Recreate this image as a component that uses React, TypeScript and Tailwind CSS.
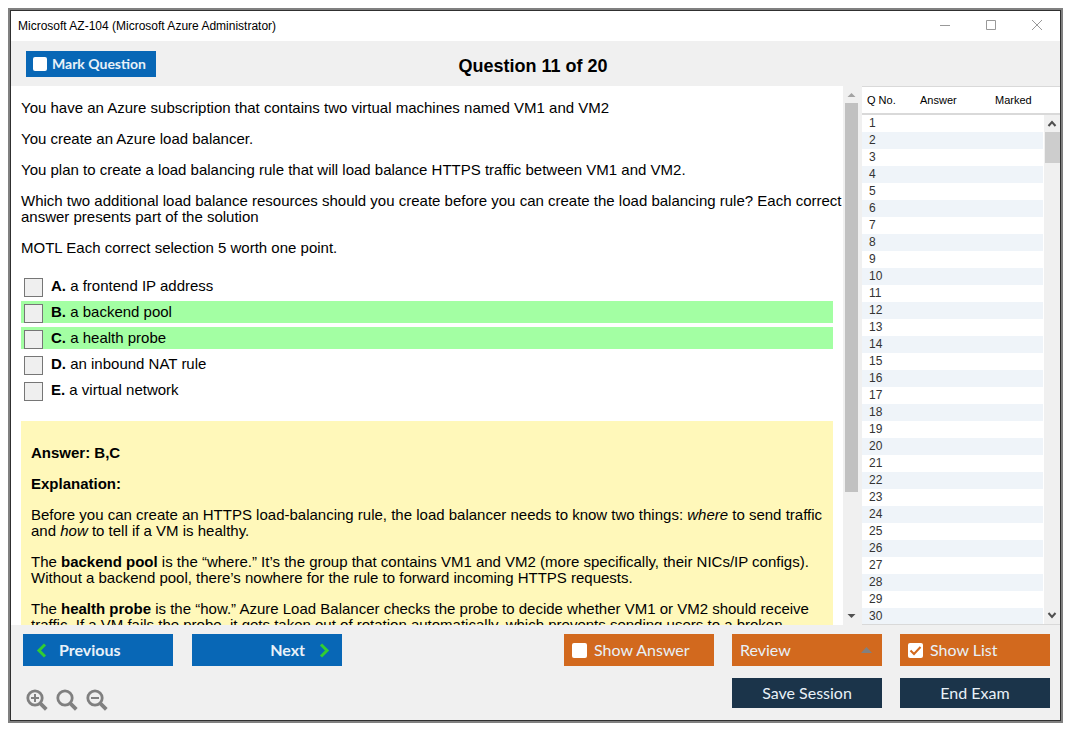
import React, { useState } from 'react';

const OPTIONS = [
  { id: 'A', text: 'a frontend IP address' },
  { id: 'B', text: 'a backend pool' },
  { id: 'C', text: 'a health probe' },
  { id: 'D', text: 'an inbound NAT rule' },
  { id: 'E', text: 'a virtual network' },
];
const CORRECT = ['B', 'C'];
const ROWS = Array.from({ length: 30 }, (_, i) => i + 1);

// White tick box used inside the coloured buttons
const TickBox = ({ checked, onChange, size }: any) => (
  <span className="grid shrink-0 place-items-center">
    <input
      type="checkbox"
      checked={checked}
      onChange={onChange}
      className={`col-start-1 row-start-1 appearance-none rounded-xs bg-white ${size}`}
    />
    {checked && (
      <svg viewBox="0 0 15 15" className="pointer-events-none col-start-1 row-start-1 size-[15px]" fill="none" stroke="#d2691e" strokeWidth="2">
        <path d="M2.5 7.5 L6 11 L12.5 4" />
      </svg>
    )}
  </span>
);

const Magnifier = ({ label, sign }: { label: string; sign?: string }) => (
  <button aria-label={label} className="size-[22px]">
    <svg viewBox="0 0 22 22" className="size-[22px]" fill="none" stroke="#808080">
      <circle cx="9" cy="9" r="7.2" strokeWidth="2.8" />
      <path d="M14.3 14.3 L20.3 20.3" strokeWidth="3.8" />
      {sign && <path d={sign} strokeWidth="2" />}
    </svg>
  </button>
);

const TitleBar = () => (
  <div className="flex h-[30px] shrink-0 items-center justify-between bg-white pl-[7px] pr-[17px]">
    <span className="text-[12px]">Microsoft AZ-104 (Microsoft Azure Administrator)</span>
    <div className="flex gap-[34px]">
      <button aria-label="Minimize">
        <svg viewBox="0 0 12 12" className="size-3" fill="none" stroke="#999"><path d="M1 5.5 H11" /></svg>
      </button>
      <button aria-label="Maximize">
        <svg viewBox="0 0 12 12" className="size-3" fill="none" stroke="#999"><path d="M1.5 0.5 H10.5 V9.5 H1.5 Z" /></svg>
      </button>
      <button aria-label="Close">
        <svg viewBox="0 0 12 12" className="size-3" fill="none" stroke="#999"><path d="M1 0 L11 10 M11 0 L1 10" /></svg>
      </button>
    </div>
  </div>
);

const Explanation = () => (
  <section className="mt-5 space-y-[15px] bg-[#fff8ba] pt-6 pl-[10px]">
    <p className="font-bold">Answer: B,C</p>
    <p className="font-bold">Explanation:</p>
    <p>
      Before you can create an HTTPS load-balancing rule, the load balancer needs to know two things: <i>where</i> to send traffic and <i>how</i> to tell if a VM is healthy.
    </p>
    <p>
      The <b>backend pool</b> is the “where.” It’s the group that contains VM1 and VM2 (more specifically, their NICs/IP configs). Without a backend pool, there’s nowhere for the rule to forward incoming HTTPS requests.
    </p>
    <p>
      The <b>health probe</b> is the “how.” Azure Load Balancer checks the probe to decide whether VM1 or VM2 should receive traffic. If a VM fails the probe, it gets taken out of rotation automatically, which prevents sending users to a broken instance.
    </p>
  </section>
);

const QuestionList = () => (
  <aside className="relative w-[198px] shrink-0 overflow-hidden border-y border-[#d9d9d9] bg-white text-[#333]">
    <table className="w-full table-fixed border-collapse">
      <thead>
        <tr className="h-[27px] border-b-2 border-[#d9d9d9] text-left text-[11px] text-black">
          <th className="w-[58px] p-0 pl-[5px] font-normal">Q No.</th>
          <th className="w-[75px] p-0 font-normal">Answer</th>
          <th className="p-0 font-normal">Marked</th>
          <th className="w-[17px] p-0"></th>
        </tr>
      </thead>
      <tbody>
        {ROWS.map((n) => (
          <tr key={n} className="group h-[17px] text-[12px] leading-[17px]">
            <td className="p-0 pl-[7px] group-even:bg-[#eff4f9]">{n}</td>
            <td className="p-0 group-even:bg-[#eff4f9]"></td>
            <td className="p-0 group-even:bg-[#eff4f9]"></td>
            <td className="p-0"></td>
          </tr>
        ))}
      </tbody>
    </table>
    <div className="absolute top-[28px] right-0 bottom-0 flex w-4 flex-col items-center bg-[#f0f0f0]">
      <svg viewBox="0 0 16 17" className="h-[17px] w-4" fill="none" stroke="#505050" strokeWidth="2"><path d="M4.5 11 L8 7 L11.5 11" /></svg>
      <div className="h-[31px] w-[15px] bg-[#cdcdcd]"></div>
      <svg viewBox="0 0 16 17" className="mt-auto h-[17px] w-4" fill="none" stroke="#505050" strokeWidth="2"><path d="M4.5 6 L8 10 L11.5 6" /></svg>
    </div>
  </aside>
);

const App: React.FC = () => {
  const [marked, setMarked] = useState(false);
  const [showAnswer, setShowAnswer] = useState(false);
  const [showList, setShowList] = useState(true);

  return (
    <div className="flex h-screen bg-white pt-2 pr-3 pb-3 pl-2 font-['Liberation_Sans',Arial,sans-serif] text-black">
      <div className="flex flex-1 border-2 border-[#808080]">
        <div className="flex min-w-0 flex-1 flex-col border border-[#303030] bg-[#f0f0f0]">
          <TitleBar />

          <header className="flex h-[45px] shrink-0 items-center pr-5 pl-[15px]">
            <div className="flex-1">
              <label className="inline-flex h-[26px] w-[130px] items-center gap-[5px] bg-[#0867b6] pl-[7px] align-middle font-['Lato',sans-serif] text-[14px] font-bold text-[#e8f1f8]">
                <TickBox checked={marked} onChange={() => setMarked(!marked)} size="size-[14px]" />
                Mark Question
              </label>
            </div>
            <h1 className="pt-[6px] text-[18px] font-bold">Question 11 of 20</h1>
            <div className="flex-1"></div>
          </header>

          <div className="flex min-h-0 flex-1">
            <main className="min-w-0 flex-1 overflow-hidden bg-white px-[10px] pt-[14px] text-[15px] leading-4">
              <div className="-mr-[10px] space-y-[15px]">
                <p>You have an Azure subscription that contains two virtual machines named VM1 and VM2</p>
                <p>You create an Azure load balancer.</p>
                <p>You plan to create a load balancing rule that will load balance HTTPS traffic between VM1 and VM2.</p>
                <p>
                  Which two additional load balance resources should you create before you can create the load balancing rule? Each correct answer presents part of the solution
                </p>
                <p>MOTL Each correct selection 5 worth one point.</p>
              </div>

              <div className="mt-[19px] flex flex-col gap-1">
                {OPTIONS.map((o) => (
                  <label key={o.id} className={`flex h-[22px] gap-2 pl-[3px] ${CORRECT.includes(o.id) ? 'bg-[#a3ffa3]' : ''}`}>
                    <input type="checkbox" className="size-[19px] shrink-0 appearance-none self-end border border-[#767676] bg-[#efefef] checked:bg-[#0867b6]" />
                    <span className="pt-[3px]"><b>{o.id}.</b> {o.text}</span>
                  </label>
                ))}
              </div>

              <Explanation />
            </main>

            <div className="flex w-[19px] shrink-0 flex-col items-center bg-[#f0f0f0]">
              <svg viewBox="0 0 13 17" className="mr-[2px] h-[17px] w-[13px]" fill="#a3a3a3"><path d="M2.5 11 L6.5 7 L10.5 11 Z" /></svg>
              <div className="mr-[2px] h-[389px] w-[13px] bg-[#c1c1c1]"></div>
              <svg viewBox="0 0 13 17" className="mt-auto mr-[2px] h-[17px] w-[13px]" fill="#505050"><path d="M2.5 6 L6.5 10 L10.5 6 Z" /></svg>
            </div>

            {showList && <QuestionList />}
          </div>

          <footer className="flex h-[95px] shrink-0 justify-between pt-[9px] pr-[10px] pl-3 font-['Lato',sans-serif] text-[16px] text-[#e8f1f8]">
            <div className="flex flex-col">
              <div className="flex gap-[19px]">
                <button className="flex h-8 w-[150px] items-center gap-3 bg-[#0867b6] pl-[13px] font-bold">
                  <svg viewBox="0 0 11 15" className="h-[15px] w-[11px]" fill="none" stroke="#32cd32" strokeWidth="3"><path d="M9 1.5 L3 7.5 L9 13.5" /></svg>
                  Previous
                </button>
                <button className="flex h-8 w-[150px] items-center justify-end gap-[14px] bg-[#0867b6] pr-3 font-bold">
                  Next
                  <svg viewBox="0 0 11 15" className="h-[15px] w-[11px]" fill="none" stroke="#32cd32" strokeWidth="3"><path d="M2 1.5 L8 7.5 L2 13.5" /></svg>
                </button>
              </div>
              <div className="mt-[23px] flex gap-2 pl-[3px]">
                <Magnifier label="Zoom in" sign="M5 9 H13 M9 5 V13" />
                <Magnifier label="Reset zoom" />
                <Magnifier label="Zoom out" sign="M5 9 H13" />
              </div>
            </div>

            <div className="grid grid-cols-[150px_150px_150px] content-start gap-x-[18px] gap-y-3">
              <label className="flex h-8 items-center gap-[7px] bg-[#d2691e] pl-2">
                <TickBox checked={showAnswer} onChange={() => setShowAnswer(!showAnswer)} size="size-[15px]" />
                Show Answer
              </label>
              <button className="flex h-8 items-center justify-between bg-[#d2691e] pr-[10px] pl-2">
                Review
                <svg viewBox="0 0 11 6" className="h-[6px] w-[11px]" fill="#808080"><path d="M0 6 L5.5 0 L11 6 Z" /></svg>
              </button>
              <label className="flex h-8 items-center gap-[7px] bg-[#d2691e] pl-2">
                <TickBox checked={showList} onChange={() => setShowList(!showList)} size="size-[15px]" />
                Show List
              </label>
              <button className="col-start-2 h-[30px] bg-[#1b344a]">Save Session</button>
              <button className="h-[30px] bg-[#1b344a]">End Exam</button>
            </div>
          </footer>
        </div>
      </div>
    </div>
  );
};

export default App;
